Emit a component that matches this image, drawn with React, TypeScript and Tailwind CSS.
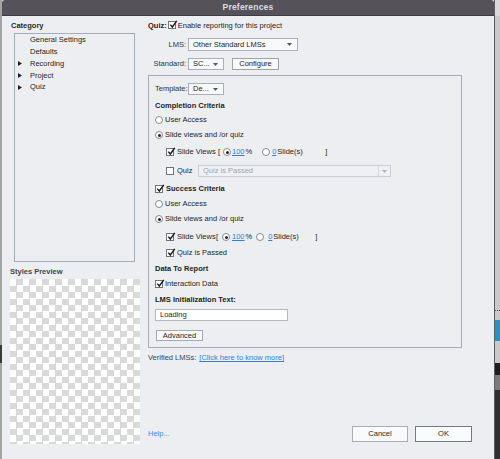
import React from 'react';

function Check({ on = true }: { on?: boolean }) {
  return (
    <span className="relative inline-block w-[8px] h-[8px] shrink-0 border border-[#6f747b] bg-white">
      {on && (
        <svg className="absolute left-[0px] top-[-2px]" width="9" height="9" viewBox="0 0 9 9">
          <path d="M1.3 4.6 L3.3 7 L7.8 0.8" fill="none" stroke="#1a1a1a" strokeWidth="1.4" />
        </svg>
      )}
    </span>
  );
}

function Radio({ on = false }: { on?: boolean }) {
  return (
    <span className="flex items-center justify-center w-[8px] h-[8px] shrink-0 rounded-full border border-[#858a92] bg-white">
      {on && <span className="w-[3px] h-[3px] rounded-full bg-[#222]" />}
    </span>
  );
}

function Arrow({ color = '#555' }: { color?: string }) {
  return (
    <svg width="5" height="3" viewBox="0 0 5 3" className="shrink-0">
      <path d="M0 0 H5 L2.5 3 Z" fill={color} />
    </svg>
  );
}

function Select({ text, className }: { text: string; className: string }) {
  return (
    <div className={`flex items-center justify-between border border-[#a9aeb8] bg-[#f8f9fb] pl-[4px] pr-[5px] ${className}`}>
      <span>{text}</span>
      <Arrow />
    </div>
  );
}

function Tri() {
  return (
    <svg width="4" height="5" viewBox="0 0 4 5">
      <path d="M0 0 L4 2.5 L0 5 Z" fill="#222" />
    </svg>
  );
}

// Slide Views [ (o) 100 % ( ) 0 Slide(s) ]
function SlideViewsRow({ tight }: { tight?: boolean }) {
  return (
    <div className="flex items-center h-[12px] pl-[11px]">
      <Check />
      {tight ? (
        <>
          <span className="ml-[3px] w-[39px] shrink-0">Slide Views</span>
          <span className="w-[6px]">[</span>
          <Radio on />
          <span className="ml-[2px] text-[#2f7fd3] underline">100</span>
          <span className="ml-[1px]">%</span>
          <span className="ml-[4px]"><Radio /></span>
          <span className="ml-[4px] text-[#2f7fd3] underline">0</span>
          <span className="ml-[1px] w-[42px]">Slide(s)</span>
          <span>]</span>
        </>
      ) : (
        <>
          <span className="ml-[3px] w-[41px] shrink-0">Slide Views</span>
          <span className="w-[5px]">[</span>
          <Radio on />
          <span className="ml-[1px] text-[#2f7fd3] underline">100</span>
          <span className="ml-[1px]">%</span>
          <span className="ml-[10px]"><Radio /></span>
          <span className="ml-[2px] text-[#2f7fd3] underline">0</span>
          <span className="ml-[1px] w-[48px]">Slide(s)</span>
          <span>]</span>
        </>
      )}
    </div>
  );
}

export default function App() {
  const checker =
    'bg-[conic-gradient(#d9d9d9_25%,#ffffff_0_50%,#d9d9d9_0_75%,#ffffff_0)] bg-[length:13px_13px]';

  return (
    <div className="w-[500px] h-[459px] flex overflow-hidden whitespace-nowrap text-[7.5px] leading-none text-[#1e1e1e] font-['Liberation_Sans',Arial,sans-serif]">
      {/* left sliver of the app behind */}
      <div className="w-[2px] flex flex-col bg-[#a4a4a4]">
        <div className="h-[345px]" />
        <div className="h-[18px] bg-[#3a3a3a]" />
      </div>

      {/* dialog */}
      <div className="w-[492px] flex flex-col bg-[#eceef2]">
        <div className="h-[16px] shrink-0 flex items-center justify-center bg-[#55525a] border-b border-[#3f3d43] rounded-t-[3px] text-[8.5px] font-bold text-[#dddce2] tracking-[0.2px]">
          Preferences
        </div>

        <div className="flex flex-1">
          {/* left column */}
          <div className="w-[146px] shrink-0 pl-[8px] flex flex-col">
            <div className="mt-[4px] ml-[1px] h-[11px] flex items-center font-bold text-[#2a2a2a]">Category</div>
            <div className="mt-[2px] ml-[4px] w-[121px] h-[229px] border border-[#a3abbd] flex flex-col">
              {[
                { t: 'General Settings', tri: false },
                { t: 'Defaults', tri: false },
                { t: 'Recording', tri: true },
                { t: 'Project', tri: true },
                { t: 'Quiz', tri: true },
              ].map((it) => (
                <div key={it.t} className="h-[11.8px] flex items-center">
                  <span className="w-[15px] pl-[3px] flex items-center">{it.tri && <Tri />}</span>
                  <span>{it.t}</span>
                </div>
              ))}
            </div>
            <div className="mt-[4px] h-[11px] flex items-center font-bold text-[#444]">Styles Preview</div>
            <div className={`mt-[2px] w-[130px] h-[165px] ${checker}`} />
          </div>

          {/* right column */}
          <div className="flex-1 flex flex-col">
            <div className="mt-[4px] h-[11px] flex items-center">
              <span className="font-bold">Quiz:</span>
              <span className="ml-[1px]"><Check /></span>
              <span className="ml-[2px]">Enable reporting for this project</span>
            </div>

            <div className="mt-[7px] h-[13px] flex items-center">
              <span className="w-[40px] text-right pr-[2px] text-[#333]">LMS:</span>
              <Select text="Other Standard LMSs" className="w-[110px] h-[13px]" />
            </div>

            <div className="mt-[7px] h-[12px] flex items-center">
              <span className="w-[40px] text-right pr-[2px] text-[#333]">Standard:</span>
              <Select text="SC..." className="w-[36px] h-[12px]" />
              <button className="ml-[8px] w-[47px] h-[12px] border border-[#9ea3ad] bg-[#f7f8fa] flex items-center justify-center">
                Configure
              </button>
            </div>

            {/* group box */}
            <div className="mt-[5px] w-[314px] h-[273px] border border-[#a7abb3] pl-[6px] flex flex-col">
              <div className="mt-[7px] h-[12px] flex items-center">
                <span className="w-[33px] text-[#333]">Template:</span>
                <Select text="De..." className="w-[36px] h-[12px]" />
              </div>
              <div className="mt-[5px] h-[11px] flex items-center font-bold">Completion Criteria</div>
              <div className="mt-[3px] h-[12px] flex items-center">
                <Radio />
                <span className="ml-[2px]">User Access</span>
              </div>
              <div className="mt-[3px] h-[12px] flex items-center">
                <Radio on />
                <span className="ml-[2px]">Slide views and /or quiz</span>
              </div>
              <div className="mt-[5px]">
                <SlideViewsRow />
              </div>
              <div className="mt-[7px] h-[12px] flex items-center pl-[11px]">
                <Check on={false} />
                <span className="ml-[3px] w-[16px]">Quiz</span>
                <div className="ml-[5px] w-[193px] h-[12px] flex items-center border border-[#c9ccd3] bg-[#eef0f3] text-[#a2a6ae]">
                  <span className="flex-1 pl-[4px]">Quiz is Passed</span>
                  <span className="w-[12px] h-full border-l border-[#d3d6dc] flex items-center justify-center">
                    <Arrow color="#b0b3ba" />
                  </span>
                </div>
              </div>
              <div className="mt-[6px] h-[12px] flex items-center">
                <Check />
                <span className="ml-[3px] font-bold">Success Criteria</span>
              </div>
              <div className="mt-[3px] h-[12px] flex items-center">
                <Radio />
                <span className="ml-[2px]">User Access</span>
              </div>
              <div className="mt-[3px] h-[12px] flex items-center">
                <Radio on />
                <span className="ml-[2px]">Slide views and /or quiz</span>
              </div>
              <div className="mt-[6px]">
                <SlideViewsRow tight />
              </div>
              <div className="mt-[4px] h-[12px] flex items-center pl-[11px]">
                <Check />
                <span className="ml-[3px]">Quiz is Passed</span>
              </div>
              <div className="mt-[4px] h-[12px] flex items-center font-bold">Data To Report</div>
              <div className="mt-[3px] h-[12px] flex items-center">
                <Check />
                <span className="ml-[2px]">Interaction Data</span>
              </div>
              <div className="mt-[4px] h-[12px] flex items-center font-bold">LMS Initialization Text:</div>
              <div className="mt-[3px] w-[133px] h-[12px] flex items-center border border-[#b3b7bf] bg-white pl-[4px]">
                Loading
              </div>
              <button className="mt-[9px] ml-[1px] w-[47px] h-[11px] border border-[#a4a8b2] bg-[#f7f8fa] flex items-center justify-center">
                Advanced
              </button>
            </div>

            <div className="mt-[4px] h-[12px] flex items-center">
              <span className="text-[#444]">Verified LMSs:</span>
              <span className="ml-[3px] text-[#2f7fd3] underline">[Click here to know more]</span>
            </div>

            <div className="mt-[62px] h-[16px] flex items-center justify-between pr-[22px]">
              <span className="text-[#3d8fd6]">Help...</span>
              <div className="flex">
                <button className="w-[56px] h-[16px] border border-[#a8adb7] bg-[#f9fafb] flex items-center justify-center">
                  Cancel
                </button>
                <button className="ml-[7px] w-[57px] h-[16px] border border-[#737a86] bg-[#fafbfc] flex items-center justify-center">
                  OK
                </button>
              </div>
            </div>
          </div>
        </div>
      </div>

      {/* right sliver of the app behind */}
      <div className="w-[6px] flex flex-col border-l border-[#5e5e5e]">
        <div className="h-[16px] bg-[#dadada]" />
        <div className="h-[294px] bg-[#c9c9c9]" />
        <div className="h-[10px] bg-[#c9c9c9] border-t border-dotted border-[#555]" />
        <div className="h-[21px] bg-[#2b8fc4]" />
        <div className="h-[22px] bg-[#c9c9c9]" />
        <div className="h-[12px] bg-[#1e1e1e]" />
        <div className="h-[15px] bg-[#7b7b7b]" />
        <div className="flex-1 bg-[#2f2f2f]" />
      </div>
    </div>
  );
}
